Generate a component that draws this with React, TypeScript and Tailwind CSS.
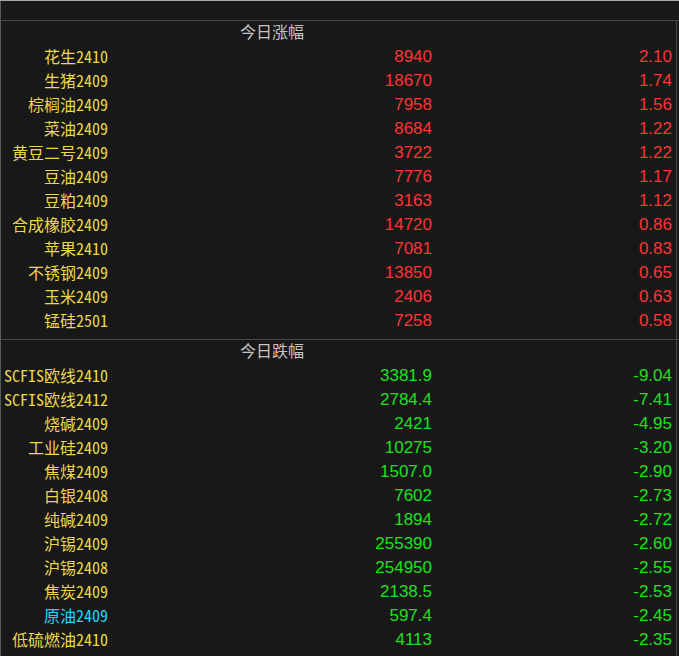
import React from "react";

type Row = { name: string; price: string; chg: string; cyan?: boolean };

const up: Row[] = [
  { name: "花生2410", price: "8940", chg: "2.10" },
  { name: "生猪2409", price: "18670", chg: "1.74" },
  { name: "棕榈油2409", price: "7958", chg: "1.56" },
  { name: "菜油2409", price: "8684", chg: "1.22" },
  { name: "黄豆二号2409", price: "3722", chg: "1.22" },
  { name: "豆油2409", price: "7776", chg: "1.17" },
  { name: "豆粕2409", price: "3163", chg: "1.12" },
  { name: "合成橡胶2409", price: "14720", chg: "0.86" },
  { name: "苹果2410", price: "7081", chg: "0.83" },
  { name: "不锈钢2409", price: "13850", chg: "0.65" },
  { name: "玉米2409", price: "2406", chg: "0.63" },
  { name: "锰硅2501", price: "7258", chg: "0.58" },
];

const down: Row[] = [
  { name: "SCFIS欧线2410", price: "3381.9", chg: "-9.04" },
  { name: "SCFIS欧线2412", price: "2784.4", chg: "-7.41" },
  { name: "烧碱2409", price: "2421", chg: "-4.95" },
  { name: "工业硅2409", price: "10275", chg: "-3.20" },
  { name: "焦煤2409", price: "1507.0", chg: "-2.90" },
  { name: "白银2408", price: "7602", chg: "-2.73" },
  { name: "纯碱2409", price: "1894", chg: "-2.72" },
  { name: "沪锡2409", price: "255390", chg: "-2.60" },
  { name: "沪锡2408", price: "254950", chg: "-2.55" },
  { name: "焦炭2409", price: "2138.5", chg: "-2.53" },
  { name: "原油2409", price: "597.4", chg: "-2.45", cyan: true },
  { name: "低硫燃油2410", price: "4113", chg: "-2.35" },
];

const cjk = { fontFamily: '"Noto Sans Mono CJK SC", "Noto Sans CJK SC", monospace' };
const num = { fontFamily: '"Liberation Sans Narrow", "Liberation Sans", Arial, sans-serif' };

function Section({ title, rows, color }: { title: string; rows: Row[]; color: string }) {
  return (
    <div className="flex flex-col">
      <div className="h-[24px] leading-[20px] pl-[239px] text-[16px] text-[#c4c4c4]" style={cjk}>
        {title}
      </div>
      {rows.map((r) => (
        <div key={r.name} className="grid grid-cols-[107px_324px_240px] h-[24px] leading-[24px]">
          <div
            className={`text-right text-[16px] leading-[22px] whitespace-nowrap ${r.cyan ? "text-[#1ad8f5]" : "text-[#ecd64a]"}`}
            style={cjk}
          >
            {r.name}
          </div>
          <div className={`text-right text-[17px] ${color}`} style={num}>
            {r.price}
          </div>
          <div className={`text-right text-[17px] ${color}`} style={num}>
            {r.chg}
          </div>
        </div>
      ))}
    </div>
  );
}

export default function App() {
  return (
    <div className="w-[679px] h-[656px] bg-[#181818] border-t border-[#a8a8a8] overflow-hidden">
      <div className="h-[19px] border-l border-[#5a5a5a]" />
      <div className="h-px bg-[#484848]" />
      <div className="w-[677px] h-[636px] border-l border-[#5a5a5a] border-r border-r-[#484848] flex flex-col">
        <Section title="今日涨幅" rows={up} color="text-[#ff3333]" />
        <div className="h-[6px]" />
        <div className="h-px bg-[#484848] -mr-[3px]" />
        <Section title="今日跌幅" rows={down} color="text-[#1ee01e]" />
      </div>
    </div>
  );
}
